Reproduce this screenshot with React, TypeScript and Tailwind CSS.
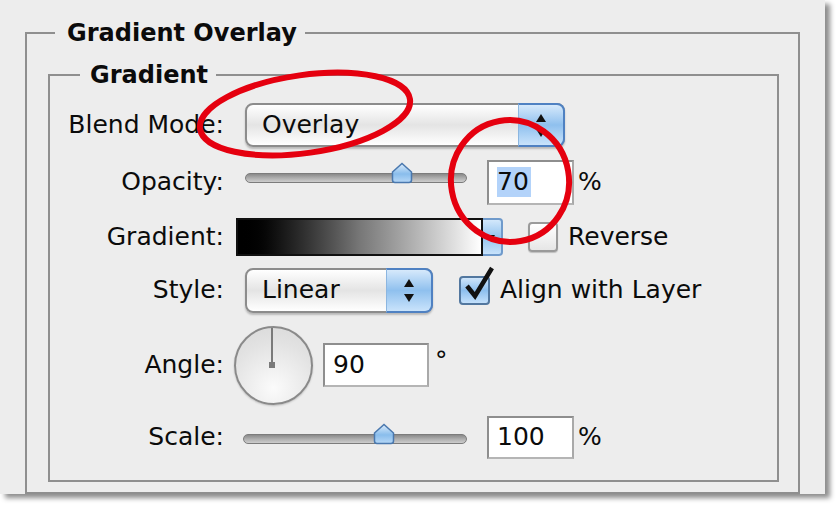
import type { ReactNode } from "react";

function Arrows() {
  return (
    <div className="flex flex-col items-center gap-[7px]">
      <svg width="10" height="8" viewBox="0 0 10 8">
        <path d="M5 0 L10 8 L0 8 Z" fill="#111" />
      </svg>
      <svg width="10" height="8" viewBox="0 0 10 8">
        <path d="M0 0 L10 0 L5 8 Z" fill="#111" />
      </svg>
    </div>
  );
}

function Select({ value, className }: { value: string; className: string }) {
  return (
    <div
      className={`flex rounded-[8px] border-2 border-[#8c8c8c] bg-linear-to-b from-white via-[#e4e4e4] to-white shadow-[0_2px_2px_rgba(0,0,0,0.22)] ${className}`}
    >
      <div className="flex flex-1 items-center pl-[15px]">{value}</div>
      <div className="-my-[2px] -mr-[2px] flex w-[47px] items-center justify-center rounded-r-[8px] border-2 border-l border-[#4f81c2] border-l-[#8cb6e0] bg-linear-to-b from-[#d6e9fb] via-[#8fc0ee] to-[#c9e3fb]">
        <Arrows />
      </div>
    </div>
  );
}

function Slider({ thumb, className }: { thumb: number; className: string }) {
  return (
    <div className={`relative h-[10px] rounded-full border border-[#7c7c7c] bg-linear-to-b from-[#8a8a8a] via-[#aeaeae] to-[#cdcdcd] ${className}`}>
      <svg
        className="absolute -top-[12px]"
        style={{ left: thumb }}
        width="22"
        height="22"
        viewBox="0 0 22 22"
      >
        <defs>
          <linearGradient id={`th${thumb}`} x1="0" y1="0" x2="0" y2="1">
            <stop offset="0" stopColor="#dcecfb" />
            <stop offset="0.55" stopColor="#89bdec" />
            <stop offset="1" stopColor="#b7d8f7" />
          </linearGradient>
        </defs>
        <path
          d="M1.5 10 L11 1.5 L20.5 10 L20.5 18 Q20.5 20.5 18 20.5 L4 20.5 Q1.5 20.5 1.5 18 Z"
          fill={`url(#th${thumb})`}
          stroke="#4a78ae"
          strokeWidth="1.5"
        />
      </svg>
    </div>
  );
}

function Field({ children, className }: { children: ReactNode; className: string }) {
  return (
    <div
      className={`flex items-center border-2 border-[#8e8e8e] border-b-[#b5b5b5] border-r-[#a9a9a9] bg-white pl-[8px] ${className}`}
    >
      {children}
    </div>
  );
}

function Label({ children }: { children: ReactNode }) {
  return <div className="w-[174px] shrink-0 text-right">{children}</div>;
}

export default function App() {
  return (
    <div className="relative h-[508px] w-[840px] overflow-hidden bg-white font-['DejaVu_Sans',sans-serif] text-[25px] leading-[30px] text-[#0b0b0b]">
      <div className="h-[494px] w-[825px] bg-[#ededed] pl-[25px] pt-[18px] shadow-[5px_4px_5px_rgba(0,0,0,0.45)]">
        <fieldset className="h-[476px] w-[775px] border-2 border-[#8f8f8f]">
          <legend className="ml-[28px] pl-3 pr-2 text-[24px] font-bold leading-[30px]">
            Gradient Overlay
          </legend>

          <fieldset className="ml-[21px] mt-[12px] h-[422px] w-[731px] border-2 border-[#8f8f8f]">
            <legend className="ml-[30px] pl-[10px] pr-2 text-[24px] font-bold leading-[30px]">
              Gradient
            </legend>

            {/* Blend mode */}
            <div className="mt-[13px] flex h-[44px] items-center">
              <Label>Blend Mode:</Label>
              <Select value="Overlay" className="ml-[21px] h-[44px] w-[320px]" />
            </div>

            {/* Opacity */}
            <div className="mt-[12px] flex h-[46px] items-center">
              <Label>Opacity:</Label>
              <Slider thumb={145} className="-mt-[9px] ml-[21px] w-[222px]" />
              <Field className="ml-[20px] h-[45px] w-[87px]">
                <span className="bg-[#b3d3fa] pr-[2px]">70</span>
              </Field>
              <span className="ml-[4px]">%</span>
            </div>

            {/* Gradient */}
            <div className="mt-[12px] flex h-[40px] items-center">
              <Label>Gradient:</Label>
              <div className="ml-[12px] flex h-[38px]">
                <div className="h-[38px] w-[247px] border-2 border-[#111] bg-linear-to-r from-black via-[#777] to-white" />
                <div className="flex h-[38px] w-[20px] items-center justify-center rounded-r-[4px] border-2 border-l-0 border-[#6f9acb] bg-linear-to-b from-[#d3e8fb] via-[#94c4ef] to-[#c7e2fb]">
                  <svg width="6" height="5" viewBox="0 0 6 5">
                    <path d="M0 0 L6 0 L3 5 Z" fill="#111" />
                  </svg>
                </div>
              </div>
              <div className="ml-[25px] h-[30px] w-[30px] rounded-[4px] border-2 border-[#9a9a9a] bg-linear-to-b from-white to-[#e6e6e6] shadow-[0_1px_1px_rgba(0,0,0,0.2)]" />
              <span className="ml-[10px]">Reverse</span>
            </div>

            {/* Style */}
            <div className="mt-[10px] flex h-[46px] items-center">
              <Label>Style:</Label>
              <Select value="Linear" className="ml-[21px] h-[45px] w-[188px]" />
              <div className="relative ml-[26px] h-[29px] w-[31px] rounded-[4px] border-2 border-[#52779f] bg-linear-to-b from-[#cfe5fa] via-[#8dbfee] to-[#c3e0fb]">
                <svg className="absolute -top-[12px] left-[2px]" width="32" height="38" viewBox="0 0 32 38">
                  <path d="M4 20 L12 30 L29 2" fill="none" stroke="#111" strokeWidth="4.5" strokeLinejoin="miter" />
                </svg>
              </div>
              <span className="ml-[10px]">Align with Layer</span>
            </div>

            {/* Angle */}
            <div className="mt-[12px] flex h-[80px] items-center">
              <Label>Angle:</Label>
              <div className="relative ml-[10px] h-[79px] w-[79px] rounded-full border-2 border-[#8a8a8a] bg-[radial-gradient(circle_at_50%_80%,#fbfbfb,#e2e2e2_65%,#d8d8d8)] shadow-[0_1px_2px_rgba(0,0,0,0.2)]">
                <div className="absolute left-[35px] top-0 h-[37px] w-[2px] bg-[#7a7a7a]" />
                <div className="absolute left-[33px] top-[34px] h-[6px] w-[6px] bg-[#7a7a7a]" />
              </div>
              <Field className="ml-[10px] h-[44px] w-[106px]">90</Field>
              <span className="mb-[8px] ml-[6px]">°</span>
            </div>

            {/* Scale */}
            <div className="mt-[10px] flex h-[44px] items-center">
              <Label>Scale:</Label>
              <Slider thumb={129} className="ml-[19px] mt-[4px] w-[224px]" />
              <Field className="ml-[20px] h-[43px] w-[87px]">100</Field>
              <span className="ml-[4px]">%</span>
            </div>
          </fieldset>
        </fieldset>
      </div>

      {/* red annotation marks */}
      <svg className="pointer-events-none absolute left-0 top-0" width="840" height="508" viewBox="0 0 840 508">
        <ellipse
          cx="305"
          cy="114"
          rx="106"
          ry="39"
          transform="rotate(-8 305 114)"
          fill="none"
          stroke="#e5000f"
          strokeWidth="6"
        />
        <ellipse
          cx="510"
          cy="181"
          rx="59"
          ry="61"
          transform="rotate(-10 510 181)"
          fill="none"
          stroke="#e5000f"
          strokeWidth="6"
        />
      </svg>
    </div>
  );
}
